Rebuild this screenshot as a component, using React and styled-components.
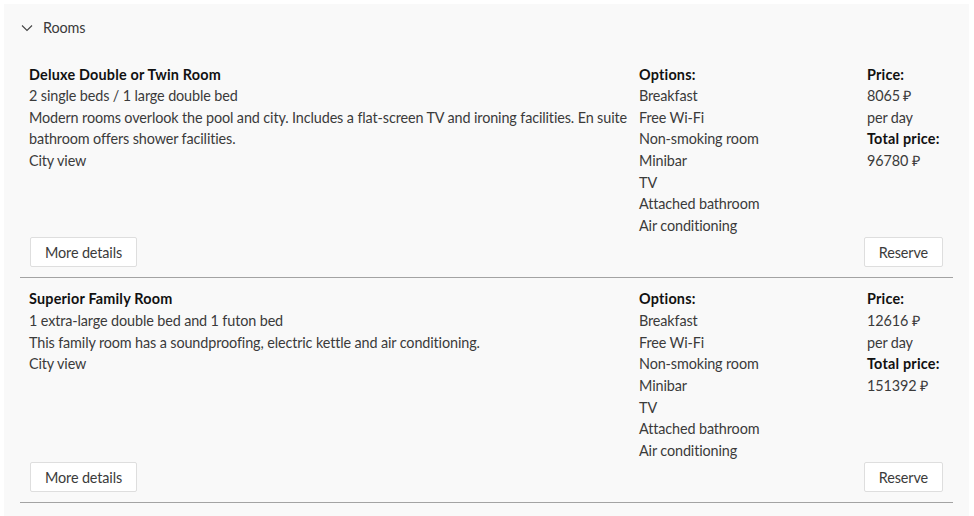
import React from "react";
import styled, { createGlobalStyle } from "styled-components";

const Global = createGlobalStyle`
  html, body { margin: 0; padding: 0; overflow: hidden; background: #ffffff; }
  body { padding: 5px 5px 0 4px; font-family: "Lato", "Segoe UI", sans-serif; font-size: 14.4px; line-height: 1.5; color: #3b3b3b; letter-spacing: -0.12px; }
  * { box-sizing: border-box; }
`;

const Panel = styled.section`
  background: #f9f9f9;
  padding: 0 16px 20px;
  margin-top: -1px;
`;

const Header = styled.div`
  display: flex;
  align-items: center;
  gap: 10px;
  padding: 13px 0 15px 1px;
  color: #3b3b3b;
`;

const Chevron = styled.svg`
  width: 12px;
  height: 12px;
  flex: none;
`;

const Item = styled.div`
  padding: 10px 10px 10px 9px;
  border-bottom: 1px solid #a3a3a3;
`;

const Grid = styled.div`
  display: grid;
  grid-template-columns: 600px 218px 76px;
  column-gap: 10px;
`;

const Col = styled.div`
  display: flex;
  flex-direction: column;
`;

const Title = styled.div`
  font-weight: 700;
  color: #111;
  letter-spacing: 0.2px;
`;

const Line = styled.div``;

const Actions = styled.div`
  display: flex;
  justify-content: space-between;
  margin-top: 1px;
`;

const Button = styled.button`
  height: 30px;
  padding: 0 14px;
  background: #ffffff;
  border: 1px solid #dedede;
  border-radius: 2px;
  font-family: inherit;
  font-size: 14.4px;
  letter-spacing: -0.12px;
  color: #3b3b3b;
  margin-left: ${(p) => (p.$first ? "1px" : "0")};
`;

const rooms = [
  {
    name: "Deluxe Double or Twin Room",
    beds: "2 single beds / 1 large double bed",
    desc: "Modern rooms overlook the pool and city. Includes a flat-screen TV and ironing facilities. En suite bathroom offers shower facilities.",
    view: "City view",
    price: "8065 ₽",
    total: "96780 ₽",
  },
  {
    name: "Superior Family Room",
    beds: "1 extra-large double bed and 1 futon bed",
    desc: "This family room has a soundproofing, electric kettle and air conditioning.",
    view: "City view",
    price: "12616 ₽",
    total: "151392 ₽",
  },
];

const options = [
  "Breakfast",
  "Free Wi-Fi",
  "Non-smoking room",
  "Minibar",
  "TV",
  "Attached bathroom",
  "Air conditioning",
];

export default function App() {
  return (
    <>
      <Global />
      <Panel>
        <Header>
          <Chevron viewBox="0 0 12 12">
            <polyline points="1,3.5 6,8.5 11,3.5" fill="none" stroke="#444" strokeWidth="1.1" />
          </Chevron>
          <span>Rooms</span>
        </Header>
        {rooms.map((r) => (
          <Item key={r.name}>
            <Grid>
              <Col>
                <Title>{r.name}</Title>
                <Line>{r.beds}</Line>
                <Line>{r.desc}</Line>
                <Line>{r.view}</Line>
              </Col>
              <Col>
                <Title>Options:</Title>
                {options.map((o) => (
                  <Line key={o}>{o}</Line>
                ))}
              </Col>
              <Col>
                <Title>Price:</Title>
                <Line>{r.price}</Line>
                <Line>per day</Line>
                <Title>Total price:</Title>
                <Line>{r.total}</Line>
              </Col>
            </Grid>
            <Actions>
              <Button $first>More details</Button>
              <Button>Reserve</Button>
            </Actions>
          </Item>
        ))}
      </Panel>
    </>
  );
}
